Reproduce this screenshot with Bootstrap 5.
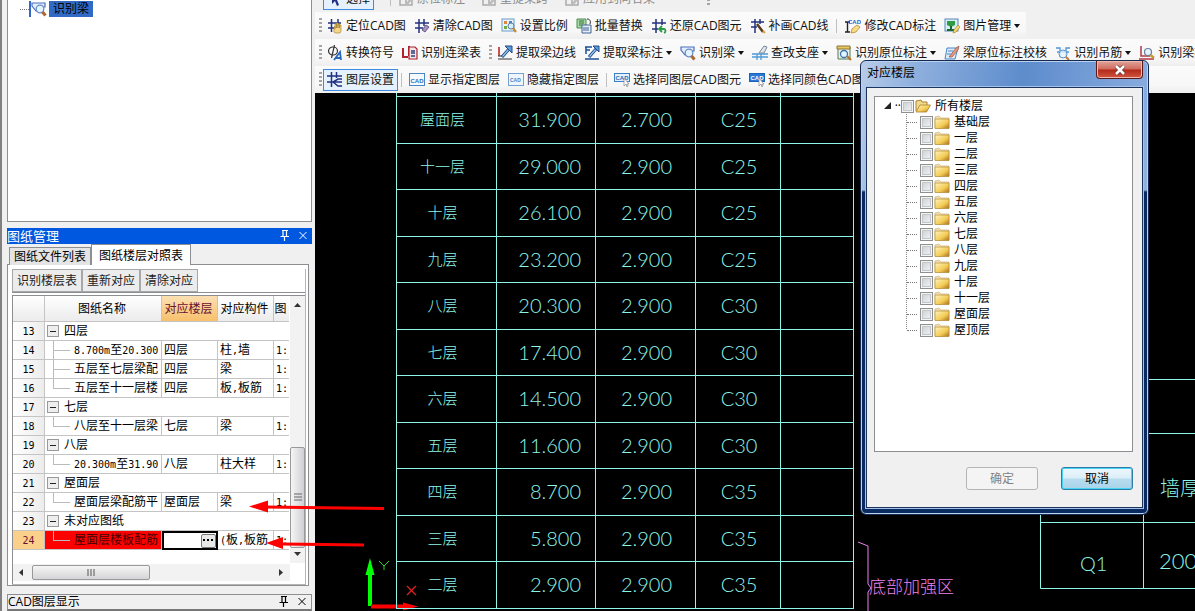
<!DOCTYPE html>
<html lang="zh-CN">
<head>
<meta charset="utf-8">
<meta name="viewport" content="width=device-width, initial-scale=1">
<title>图纸管理</title>
<link rel="stylesheet" href="https://cdn.jsdelivr.net/npm/bootstrap@5.3.0/dist/css/bootstrap.min.css">
<script src="https://cdn.jsdelivr.net/npm/bootstrap@5.3.0/dist/js/bootstrap.bundle.min.js"></script>
<style>
  :root { --face: #f0f0f0; --edge: #8c8e92; --cad: #8ff5e8; }
  body { font: 12px/16px "Open Sans", "Noto Sans CJK SC", sans-serif; color: #000; background: var(--face); }
  button { font: inherit; color: inherit; white-space: nowrap; }
  .hw { font-family: "DejaVu Sans Mono", monospace; font-size: 10px; line-height: 10px; }

  /* left dock */
  .dock { width: 315px; padding: 0 3px 0 5px; border-left: 2px solid #808080; }
  .tool-tree { height: 222px; border: 1px solid var(--edge); border-top: 0; background: #fff; padding: 1px 0 0 12px; }
  .tool-tree .dots { width: 9px; border-top: 1px dotted #777; }
  .tool-tree .pick { border-left: 2px solid #316ac5; padding-right: 2px; height: 16px; }
  .tool-tree a { background: #316ac5; color: #000; padding: 0 4px; height: 16px; line-height: 15px; text-decoration: none; }
  .cap { height: 16px; }
  .cap.on { background: #0058e0; color: #fff; margin-top: 6px; font-size: 13px; line-height: 15px; }
  .cap.off { border: 1px solid var(--edge); margin-top: 8px; border-bottom: 2px solid #777; height: 17px; line-height: 14px; }
  .cap button { border: 0; background: none; width: 18px; height: 14px; }
  .tabs { height: 21px; padding-left: 2px; margin-bottom: -1px; position: relative; z-index: 1; }
  .tabs button { border: 1px solid var(--edge); border-bottom: 0; background: #e4e4e4; padding: 0 4px; height: 18px; line-height: 17px; }
  .tabs button.on { background: #fff; height: 21px; line-height: 19px; padding: 0 7px; }
  .pane { border: 1px solid var(--edge); background: #fff; margin-right: 3px; height: 322px; padding: 4px 2px 2px 4px; }
  .pane-in { border: 1px solid #b5b5b5; border-width: 0 1px 1px 0; }
  .cmds button { border: 1px solid #a5a8ab; background: #ececec; height: 23px; padding: 0 4px; color: #222; }
  .cmds { border-bottom: 1px solid var(--edge); margin-bottom: 2px; }
  .grid-box { border: 1px solid var(--edge); border-right: 0; border-bottom: 0; height: 289px; overflow: hidden; }
  .sheet { table-layout: fixed; width: 276px; border-collapse: separate; border-spacing: 0; }
  .sheet th, .sheet td { height: 19px; padding: 0 0 0 2px; border: solid #c4c4c4; border-width: 0 1px 1px 0; white-space: nowrap; overflow: hidden; font-weight: 400; line-height: 16px; vertical-align: middle; }
  .sheet thead th { height: 26px; text-align: center; padding: 0 2px 0 0; background: linear-gradient(#fff, #f3f3f3 60%, #ececec); }
  .sheet thead th.hot { background: linear-gradient(#fbe0b4, #f7c06c); color: #6b1030; }
  .sheet tbody th { text-align: center; padding: 0; background: linear-gradient(90deg, #fff, #ececec); }
  .sheet td:last-child, .sheet th.last { border-right: 0; }
  .sheet tbody th.hot { background: #fbd08a; color: #6b1030; }
  .sheet .leaf { padding-left: 29px; background: linear-gradient(#bbb, #bbb) 8px 0/1px 100% no-repeat, linear-gradient(#bbb, #bbb) 9px 9px/16px 1px no-repeat; }
  .sheet .leaf.end { background-size: 1px 10px, 16px 1px; }
  .sheet .bad { background-color: #f00; color: #400; }
  .sheet .edit { padding: 0; border: 2px solid #000; background: #fff; }
  .fold { width: 12px; height: 12px; border: 1px solid #999; background: #eee; padding: 0; margin-right: 5px; display: flex; align-items: center; justify-content: center; }
  .fold::before { content: ""; width: 6px; height: 1px; background: #222; }
  .more { border: 1px solid #777; border-radius: 2px; background: #e8e8e8; height: 14px; width: 15px; padding: 0; display: flex; align-items: center; justify-content: center; margin-left: auto; }
  .vbar { width: 15px; margin-left: 1px; background: #f2f2f2; padding: 7px 0 6px; height: 267px; }
  .hbar { height: 17px; background: #f2f2f2; padding: 0 6px; margin: 1px 15px 0 0; }
  .thumb { border: 1px solid #999; border-radius: 2px; background: linear-gradient(#f5f5f5, #d5d5d8); display: flex; align-items: center; justify-content: center; }
  .vbar .thumb { height: 101px; width: 15px; background: linear-gradient(90deg, #f5f5f5, #d0d0d4); }
  .hbar .thumb { width: 118px; height: 15px; }

  /* toolbars */
  .strip { height: 27px; padding-left: 4px; background: linear-gradient(#fbfbfb, #f7f7f7 70%, #eee); overflow: hidden; }
  .strip.fit { align-self: flex-start; padding-right: 2px; }
  .cut { height: 12px; overflow: hidden; display: flex; align-items: flex-end; }
  .cut .strip { background: var(--face); width: 100%; }
  .grip { width: 3px; height: 15px; flex: none; background: repeating-linear-gradient(#a5a5a5 0 2px, transparent 2px 4px); margin-right: 1px; }
  .rule { width: 1px; height: 14px; flex: none; background: #c0c0c0; margin: 0 3px; }
  .tb { border: 1px solid transparent; background: none; height: 22px; padding: 0 3px; display: flex; align-items: center; gap: 3px; flex: none; color: #111; }
  .tb.on { border-color: #3c8be0; background: #e5f1fc; }
  .tb:disabled { color: #8b8b8b; }
  .tb svg, .ico { width: 16px; height: 16px; flex: none; }
  .tb.dropdown-toggle::after { margin-left: 0; border-width: 4px 3px 0; border-top-color: #111; vertical-align: middle; }

  /* drawing canvas */
  .canvas { background: #000; color: var(--cad); overflow: hidden; }
  .levels { position: relative; table-layout: fixed; width: 458px; margin: 3px 0 0 81px; border-collapse: separate; border-spacing: 0; font: 300 20px/24px Lato, "Noto Sans CJK SC", sans-serif; border: solid var(--cad); border-width: 1px 0 0 1px; }
  .levels th, .levels td { border: solid var(--cad); border-width: 0 1px 1px 0; height: 47px; padding: 0 0 2px; text-align: center; vertical-align: middle; font-weight: 300; }
  .levels tr:nth-child(even) > * { height: 46px; }
  .levels th { font-size: 15px; padding-right: 8px; }
  .levels td { padding-left: 2px; }
  .levels td.num { text-align: right; padding-right: 14px; }
  .drawing { position: absolute; inset: 0; width: 100%; height: 100%; font-family: Lato, "Noto Sans CJK SC", sans-serif; font-weight: 300; }
  .marks { position: absolute; left: 0; top: 0; width: 420px; height: 611px; pointer-events: none; z-index: 3; }

  /* dialog */
  .dlg { position: absolute; top: 60px; right: 46px; width: 289px; z-index: 5; border: 1px solid #14294d; border-radius: 6px; padding: 0 5px 6px; box-shadow: inset 0 0 0 1px #b9d2f2;
    background: linear-gradient(transparent, transparent 129px, #0a2a62 131px), linear-gradient(100deg, #b8cce8, #8fb0de 15%, #5d8ccc 45%, #82a7dc 75%, #a9c4e8); }
  .dlg-head { height: 26px; padding-left: 1px; }
  .dlg-head button { width: 47px; height: 18px; border: 1px solid #5b1a1a; border-top: 0; border-radius: 0 0 4px 4px; padding: 0; background: linear-gradient(#e0a59a, #cf6a5c 48%, #b3291a 52%, #d2573f); box-shadow: inset 0 0 0 1px #efb9ae; line-height: 14px; }
  .dlg-body { background: var(--face); border: 1px solid #1c355e; box-shadow: 0 0 0 1px #a7c2e8; padding: 8px 9px 17px 7px; }
  .floors { background: #fff; border: 1px solid var(--edge); height: 356px; padding: 1px 0 0 9px; list-style: none; margin: 0 0 15px; }
  .floors ul { list-style: none; margin: 0 0 0 22px; padding: 0; background: repeating-linear-gradient(#888 0 1px, transparent 1px 2px) 0 0/1px 216px no-repeat; }
  .floors label { display: flex; align-items: center; height: 16px; line-height: 16px; }
  .floors li li label::before { content: ""; width: 10px; border-top: 1px dotted #777; margin: 0 3px 0 1px; }
  .floors input { appearance: none; width: 13px; height: 13px; margin: 0 1px 0 0; border: 1px solid #8e8f8f; background: linear-gradient(135deg, #c9ccd0, #f6f6f6); box-shadow: inset 0 0 0 1px #f4f4f4, inset 0 0 0 2px #c3c6ca; }
  .floors svg { width: 16px; height: 14px; margin-right: 4px; }
  .twist { width: 17px; height: 8px; flex: none; display: flex; align-items: center; }
  .twist svg { margin: 0; width: 8px; height: 8px; }
  .dlg-btn { width: 72px; height: 23px; border: 1px solid #b5b5b5; border-radius: 3px; background: #f4f4f4; line-height: 18px; padding: 0; }
  .dlg-btn:disabled { color: #838383; }
  .dlg-btn.main { border-color: #2c7ea8; box-shadow: inset 0 0 0 1px #46d3f5; background: linear-gradient(#edf7fc, #dceef8 48%, #b8dcee 52%, #a8d4ea); margin-left: 23px; }
</style>
</head>
<body class="vh-100 overflow-hidden d-flex position-relative">

<svg class="position-absolute" width="0" height="0" aria-hidden="true">
  <defs>
    <linearGradient id="gold" x1="0" y1="0" x2="1" y2="1"><stop offset="0" stop-color="#fff3bd"/><stop offset=".6" stop-color="#f3cb55"/><stop offset="1" stop-color="#a8701a"/></linearGradient>
  </defs>
</svg>
<svg class="d-none" aria-hidden="true">
  <symbol id="i-locate" viewBox="0 0 16 16"><path d="M1 5h13M1 10h7M4.500 1v13M11 1v6" stroke="#23307f" stroke-width="1.500" fill="none"/><path d="M7 14V9l1-1v3-5h1.500v4-5H11v5-4h1.500v4-3H14v6l-1 2H8z" fill="#f6d68a" stroke="#a8842c" stroke-width=".7"/></symbol>
  <symbol id="i-wipe" viewBox="0 0 16 16"><path d="M1 5h14M1 10h8M5 1v14M10 1v7" stroke="#23307f" stroke-width="1.500" fill="none"/><path d="M8 12l4-5 3 2-4 5z" fill="#a894c4" stroke="#4d4170" stroke-width=".8"/></symbol>
  <symbol id="i-scale" viewBox="0 0 16 16"><rect x="1" y="1" width="12" height="12" fill="#e9f3fc" stroke="#6a9bc8"/><path d="M3 3h3v3H3z" fill="#e0853a"/><path d="M3 8h3v3H3z" fill="#6fae3c"/><path d="M8 3h3v2H8z" fill="#4a86c6"/><circle cx="10" cy="8" r="3" fill="#d5ecfa" stroke="#5a7fa8"/><path d="M12 10l3 4" stroke="#c58a35" stroke-width="2.200"/></symbol>
  <symbol id="i-swap" viewBox="0 0 16 16"><path d="M1 1h9v9H1z" fill="#a9d8a0" stroke="#4c8d54"/><path d="M3 3h5M3 5h5M3 7h3" stroke="#36714a"/><path d="M6 7h9v8H6z" fill="#e4eefa" stroke="#43628f"/><path d="M8 9v4M10 9v4M12 9v4" stroke="#43628f"/><path d="M11 1c3 0 4 2 3 5" stroke="#333" fill="none"/></symbol>
  <symbol id="i-restore" viewBox="0 0 16 16"><path d="M1 5h14M1 11h6M5 1v14M11 1v6" stroke="#23307f" stroke-width="1.500" fill="none"/><path d="M8 11h5c2 0 2 3 0 4M11 8l-3 3 3 3" stroke="#2e9a48" stroke-width="1.800" fill="none"/></symbol>
  <symbol id="i-pen" viewBox="0 0 16 16"><path d="M1 4h13M1 9h6M5 1v14M10 1v5" stroke="#23307f" stroke-width="1.500" fill="none"/><path d="M7 6l6 8" stroke="#5b3b1c" stroke-width="2.500"/><path d="M13 13l2 2" stroke="#e0a03a" stroke-width="2"/></symbol>
  <symbol id="i-edit" viewBox="0 0 16 16"><path d="M0 4h5M2.500 4v10M0 14h5" stroke="#222" stroke-width="1.400" fill="none"/><text x="3" y="6" font-size="6" font-weight="700" fill="#1f63c8" font-family="Liberation Sans">CAD</text><path d="M6 15l1-4 5-4 3 2-4 5z" fill="#f7dd8c" stroke="#b88428" stroke-width=".8"/></symbol>
  <symbol id="i-image" viewBox="0 0 16 16"><rect x="1" y="1" width="13" height="12" fill="#d9ecfa" stroke="#5d87b4"/><path d="M3 3h8v4L7 9 3 7z" fill="#2f9c43"/><path d="M7 8v4M3 12h7" stroke="#1c6a2c" stroke-width="2"/><path d="M9 15l1-3 4-5 2 2-4 5z" fill="#f8dc72" stroke="#b0812a" stroke-width=".7"/></symbol>
  <symbol id="i-phi" viewBox="0 0 16 16"><ellipse cx="6" cy="6" rx="4.500" ry="4" fill="none" stroke="#333" stroke-width="1.200"/><path d="M7.500 0l-3 13" stroke="#333" stroke-width="1.200"/><path d="M7 15l6-8 1 8M9 13h5" stroke="#2868b8" stroke-width="1.800" fill="none"/></symbol>
  <symbol id="i-link" viewBox="0 0 16 16"><path d="M1 3v9h5M7 1v10" stroke="#b0232d" stroke-width="2" fill="none"/><path d="M7 2h6l2 2v10H7z" fill="#f6e3e5" stroke="#a82430" stroke-width="1.200"/><path d="M9 6h4M9 8h4M9 11h4" stroke="#29417c" stroke-width="1.300"/></symbol>
  <symbol id="i-edge" viewBox="0 0 16 16"><path d="M2 2v9" stroke="#c02828" stroke-width="1.600"/><path d="M1 11h5M1 14h14" stroke="#333" stroke-width="1.200"/><path d="M5 12l7-8" stroke="#1d4c8c" stroke-width="3.200"/><path d="M5.500 11.500l6-7" stroke="#9cc8ee" stroke-width="1.200"/><path d="M8 1h7v7z" fill="#5f9bd6" stroke="#1d4c8c"/></symbol>
  <symbol id="i-note" viewBox="0 0 16 16"><path d="M1 2h7M2 2v7M2 5h4M1 14h14" stroke="#1e4f98" stroke-width="1.500"/><path d="M5 12l7-8" stroke="#1d4c8c" stroke-width="3.200"/><path d="M5.500 11.500l6-7" stroke="#9cc8ee" stroke-width="1.200"/><path d="M9 1h6v6z" fill="#5f9bd6" stroke="#1d4c8c"/></symbol>
  <symbol id="i-find" viewBox="0 0 16 16"><path d="M1 2h13v4h-2v4H5L1 5z" fill="#e3eefb" stroke="#4b6fb8" stroke-width="1.200"/><circle cx="9" cy="8" r="3.800" fill="#e2f4fd" stroke="#6b8fc4" stroke-width="1.300"/><path d="M11.500 11l3 3.500" stroke="#b0652a" stroke-width="3"/></symbol>
  <symbol id="i-support" viewBox="0 0 16 16"><path d="M0 9h16M0 12h16M5 9v6M9 9v6" stroke="#4d9bd6" stroke-width="1.300"/><path d="M7 8l5-7 3 1-3 6z" fill="#dfe6ee" stroke="#7a8797"/></symbol>
  <symbol id="i-origin" viewBox="0 0 16 16"><path d="M2 2h12v12H2z" fill="#eaf2e4" stroke="#55785c"/><path d="M1 1h13v3H1z" fill="#e8c861" stroke="#8d7534"/><circle cx="8" cy="9" r="3.500" fill="#e2f4fd" stroke="#3e74a8" stroke-width="1.300"/><path d="M11 11l4 4" stroke="#b9772d" stroke-width="2.200"/></symbol>
  <symbol id="i-check" viewBox="0 0 16 16"><path d="M3 3h11l-3 11H1z" fill="#dcebfa" stroke="#4a86c6"/><path d="M4 6h5M3 9h4" stroke="#4a86c6"/><path d="M5 12l7-9 3-2-1 4-6 7z" fill="#e49a80" stroke="#94503d" stroke-width=".7"/></symbol>
  <symbol id="i-hang" viewBox="0 0 16 16"><path d="M1 3h4v3M15 3h-4v3M2 7h12M5 7v5M11 7v5" stroke="#4d94d8" stroke-width="1.300" fill="none"/><circle cx="8" cy="9" r="4" fill="#e5f4fd" fill-opacity=".8" stroke="#5b94cc"/><path d="M11 12l3 3" stroke="#c27a2c" stroke-width="2"/></symbol>
  <symbol id="i-beam" viewBox="0 0 16 16"><path d="M2 1v10h9M0 14h15" stroke="#b0384a" stroke-width="1.500" fill="none"/><circle cx="9" cy="7" r="3.500" fill="#e2f4fd" stroke="#6b7f9c" stroke-width="1.200"/><path d="M11.500 10l3.500 3" stroke="#c29a2c" stroke-width="2.400"/></symbol>
  <symbol id="i-layers" viewBox="0 0 16 16"><path d="M0 4h15M0 10h6M4.500 0v15M9.500 0v6M15 7h-4l-5 3h9M6 10l5 4h4" stroke="#23307f" stroke-width="1.500" fill="none"/></symbol>
  <symbol id="i-cad" viewBox="0 0 16 16"><rect x=".5" y="1.500" width="15" height="12" fill="#f4faff" stroke="#4b87c4"/><text x="1.500" y="10.500" font-size="6" font-weight="700" fill="#2a6cb8" font-family="Liberation Sans">CAD</text></symbol>
  <symbol id="i-cadhide" viewBox="0 0 16 16"><rect x=".5" y="1.500" width="15" height="12" fill="#eef5fc" stroke="#74a2d2"/><text x="2" y="9.500" font-size="5" font-weight="700" fill="#4d83bd" font-family="Liberation Sans">CAD</text></symbol>
  <symbol id="i-cadpick" viewBox="0 0 16 16"><rect x=".5" y="1.500" width="15" height="8" fill="#e3f1fd" stroke="#3c7fc6"/><text x="1.500" y="8" font-size="6" font-weight="700" fill="#2a6cb8" font-family="Liberation Sans">CAD</text><path d="M10 6v8l2-2 1 3 1-1-1-2h2z" fill="#fff" stroke="#888" stroke-width=".7"/></symbol>
  <symbol id="i-cadcolor" viewBox="0 0 16 16"><rect x=".5" y="1.500" width="15" height="8" fill="#2a78d6" stroke="#1c62b8"/><text x="1.500" y="8" font-size="6" font-weight="700" fill="#fff" font-family="Liberation Sans">CAD</text><path d="M10 6v8l2-2 1 3 1-1-1-2h2z" fill="#fff" stroke="#888" stroke-width=".7"/></symbol>
  <symbol id="i-arrow" viewBox="0 0 16 16"><path d="M5 1v12l3-3 2 5 2-1-2-5h4z" fill="#23307f"/></symbol>
  <symbol id="i-grey" viewBox="0 0 16 16"><path d="M2 2h12v12H2zM5 5h6M5 8h3v5" fill="none" stroke="#aaa" stroke-width="1.500"/><path d="M8 14l6-7" stroke="#bbb" stroke-width="2.500"/></symbol>
  <symbol id="i-folder" viewBox="0 0 16 14"><path d="M1 2l4-1 2 2h8v10H1z" fill="#f0e2b8" stroke="#c9a860" stroke-width=".6"/><path d="M1 4h14v9.500H1z" fill="url(#gold)" stroke="#b58a35" stroke-width=".7"/></symbol>
  <symbol id="i-open" viewBox="0 0 16 14"><path d="M1 12V2l5-1 1 2h5v3" fill="#f3d98e" stroke="#a8822f"/><path d="M1 13l4-7h10.500l-4 7z" fill="url(#gold)" stroke="#a8822f" stroke-width=".8"/></symbol>
  <symbol id="i-pin" viewBox="0 0 12 12"><path d="M3 1.500h6M4 1.500v6M7.500 1v6.500M1.500 7.500h8.500M5.500 8v4" stroke="currentColor" stroke-width="1.200" fill="none"/></symbol>
  <symbol id="i-x" viewBox="0 0 12 12"><path d="M2.500 3l7 7M9.500 3l-7 7" stroke="currentColor" stroke-width="1" fill="none"/></symbol>
</svg>

<aside class="dock d-flex flex-column flex-shrink-0">
  <div class="tool-tree flex-shrink-0">
    <div class="d-flex align-items-center">
      <span class="dots"></span>
      <span class="pick d-flex"><svg class="ico"><use href="#i-find"/></svg></span>
      <a href="#">识别梁</a>
    </div>
  </div>

  <div class="cap on d-flex align-items-center flex-shrink-0"><span class="flex-grow-1">图纸管理</span>
    <button aria-label="固定" class="d-flex justify-content-center p-0"><svg width="12" height="12"><use href="#i-pin"/></svg></button>
    <button aria-label="关闭" class="d-flex justify-content-center p-0"><svg width="12" height="12"><use href="#i-x"/></svg></button>
  </div>
  <div class="tabs d-flex align-items-end flex-shrink-0"><button>图纸文件列表</button><button class="on">图纸楼层对照表</button></div>
  <div class="pane flex-shrink-0">
    <div class="pane-in">
      <div class="cmds d-flex"><button>识别楼层表</button><button>重新对应</button><button>清除对应</button></div>
      <div class="grid-box">
        <div class="d-flex align-items-start">
          <table class="sheet flex-shrink-0">
            <colgroup><col style="width:32px"><col style="width:117px"><col style="width:56px"><col style="width:56px"><col></colgroup>
            <thead><tr><th></th><th>图纸名称</th><th class="hot">对应楼层</th><th>对应构件</th><th class="last">图</th></tr></thead>
            <tbody>
              <tr><th><span class="hw">13</span></th><td colspan="4"><div class="d-flex align-items-center"><button class="fold" aria-label="收起"></button>四层</div></td></tr>
              <tr><th><span class="hw">14</span></th><td class="leaf"><span class="hw">8.700m</span>至<span class="hw">20.300</span></td><td>四层</td><td>柱<span class="hw">,</span>墙</td><td><span class="hw">1:</span></td></tr>
              <tr><th><span class="hw">15</span></th><td class="leaf">五层至七层梁配</td><td>四层</td><td>梁</td><td><span class="hw">1:</span></td></tr>
              <tr><th><span class="hw">16</span></th><td class="leaf end">五层至十一层楼</td><td>四层</td><td>板<span class="hw">,</span>板筋</td><td><span class="hw">1:</span></td></tr>
              <tr><th><span class="hw">17</span></th><td colspan="4"><div class="d-flex align-items-center"><button class="fold" aria-label="收起"></button>七层</div></td></tr>
              <tr><th><span class="hw">18</span></th><td class="leaf end">八层至十一层梁</td><td>七层</td><td>梁</td><td><span class="hw">1:</span></td></tr>
              <tr><th><span class="hw">19</span></th><td colspan="4"><div class="d-flex align-items-center"><button class="fold" aria-label="收起"></button>八层</div></td></tr>
              <tr><th><span class="hw">20</span></th><td class="leaf end"><span class="hw">20.300m</span>至<span class="hw">31.90</span></td><td>八层</td><td>柱大样</td><td><span class="hw">1:</span></td></tr>
              <tr><th><span class="hw">21</span></th><td colspan="4"><div class="d-flex align-items-center"><button class="fold" aria-label="收起"></button>屋面层</div></td></tr>
              <tr><th><span class="hw">22</span></th><td class="leaf end">屋面层梁配筋平</td><td>屋面层</td><td>梁</td><td><span class="hw">1:</span></td></tr>
              <tr><th><span class="hw">23</span></th><td colspan="4"><div class="d-flex align-items-center"><button class="fold" aria-label="收起"></button>未对应图纸</div></td></tr>
              <tr><th class="hot"><span class="hw">24</span></th><td class="leaf end bad">屋面层楼板配筋</td><td class="edit"><button class="more" aria-label="选择楼层"><svg width="11" height="3"><path d="M0 0h2v2H0zM4 0h2v2H4zM8 0h2v2H8z"/></svg></button></td><td><span class="hw">(</span>板<span class="hw">,</span>板筋</td><td><span class="hw">1:</span></td></tr>
            </tbody>
          </table>
          <div class="vbar d-flex flex-column align-items-center">
            <svg width="8" height="5"><path d="M0 4l3.500-4L7 4z" fill="#333"/></svg>
            <div class="thumb mt-auto mb-1"><svg width="8" height="9"><path d="M0 1h8M0 4h8M0 7h8" stroke="#666"/></svg></div>
            <svg width="8" height="5"><path d="M0 0l3.500 4L7 0z" fill="#333"/></svg>
          </div>
        </div>
        <div class="hbar d-flex align-items-center">
          <svg width="5" height="8"><path d="M4 0L0 3.500 4 7z" fill="#333"/></svg>
          <div class="thumb ms-2"><svg width="9" height="7"><path d="M1 0v7M4 0v7M7 0v7" stroke="#555"/></svg></div>
          <svg class="ms-auto" width="5" height="8"><path d="M0 0l4 3.500L0 7z" fill="#333"/></svg>
        </div>
      </div>
    </div>
  </div>
  <div class="cap off d-flex align-items-center flex-shrink-0"><span class="flex-grow-1">CAD图层显示</span>
    <button aria-label="固定" class="d-flex justify-content-center p-0"><svg width="12" height="12"><use href="#i-pin"/></svg></button>
    <button aria-label="关闭" class="d-flex justify-content-center p-0"><svg width="12" height="12"><use href="#i-x"/></svg></button>
  </div>
</aside>

<main class="flex-grow-1 d-flex flex-column overflow-hidden">
  <div class="cut flex-shrink-0"><div class="strip d-flex align-items-center">
    <span class="grip invisible"></span>
    <button class="tb on"><svg><use href="#i-arrow"/></svg>选择</button>
    <span class="rule ms-3"></span>
    <button class="tb" disabled><svg><use href="#i-grey"/></svg>原位标注</button>
    <button class="tb ms-2" disabled><svg><use href="#i-grey"/></svg>重提梁跨</button>
    <button class="tb ms-2" disabled><svg><use href="#i-grey"/></svg>应用到同名梁</button>
    <span class="grip ms-5"></span>
  </div></div>
  <div class="strip fit d-flex align-items-center flex-shrink-0">
    <span class="grip"></span>
    <button class="tb"><svg><use href="#i-locate"/></svg>定位CAD图</button>
    <button class="tb"><svg><use href="#i-wipe"/></svg>清除CAD图</button>
    <button class="tb"><svg><use href="#i-scale"/></svg>设置比例</button>
    <button class="tb"><svg><use href="#i-swap"/></svg>批量替换</button>
    <button class="tb"><svg><use href="#i-restore"/></svg>还原CAD图元</button>
    <button class="tb"><svg><use href="#i-pen"/></svg>补画CAD线</button>
    <span class="rule mx-1"></span>
    <button class="tb"><svg><use href="#i-edit"/></svg>修改CAD标注</button>
    <button class="tb dropdown-toggle"><svg><use href="#i-image"/></svg>图片管理</button>
  </div>
  <div class="strip d-flex align-items-center flex-shrink-0">
    <span class="grip"></span>
    <button class="tb"><svg><use href="#i-phi"/></svg>转换符号</button>
    <button class="tb"><svg><use href="#i-link"/></svg>识别连梁表</button>
    <span class="grip ms-1"></span>
    <button class="tb"><svg><use href="#i-edge"/></svg>提取梁边线</button>
    <button class="tb dropdown-toggle"><svg><use href="#i-note"/></svg>提取梁标注</button>
    <button class="tb dropdown-toggle"><svg><use href="#i-find"/></svg>识别梁</button>
    <button class="tb dropdown-toggle"><svg><use href="#i-support"/></svg>查改支座</button>
    <button class="tb dropdown-toggle"><svg><use href="#i-origin"/></svg>识别原位标注</button>
    <button class="tb"><svg><use href="#i-check"/></svg>梁原位标注校核</button>
    <button class="tb dropdown-toggle"><svg><use href="#i-hang"/></svg>识别吊筋</button>
    <button class="tb"><svg><use href="#i-beam"/></svg>识别梁构件</button>
  </div>
  <div class="strip d-flex align-items-center flex-shrink-0">
    <span class="grip"></span>
    <button class="tb on"><svg><use href="#i-layers"/></svg>图层设置</button>
    <span class="rule"></span>
    <button class="tb"><svg><use href="#i-cad"/></svg>显示指定图层</button>
    <button class="tb"><svg><use href="#i-cadhide"/></svg>隐藏指定图层</button>
    <span class="rule"></span>
    <button class="tb"><svg><use href="#i-cadpick"/></svg>选择同图层CAD图元</button>
    <button class="tb"><svg><use href="#i-cadcolor"/></svg>选择同颜色CAD图元</button>
  </div>

  <div class="canvas flex-grow-1 position-relative">
    <svg class="drawing">
      <g transform="translate(-315 -93)">
        <path d="M396.500 93V97M496.500 93V97M595.500 93V97M695.500 93V97M780.500 93V97M853.500 93V97M1149 379.500H1195M1149 433.500H1195M1040.500 515V588.500H1195M1143.500 515V588M1040 522.500H1195" stroke="#8ff5e8" fill="none"/>
        <text x="1080" y="571" font-size="20" fill="#8ff5e8">Q1</text>
        <text x="1159" y="569" font-size="22" fill="#8ff5e8">200</text>
        <text x="1160" y="496" font-size="20" fill="#8ff5e8">墙厚</text>
        <path d="M858 542l10 4v38l3 4-3 4v20" stroke="#ee82ee" fill="none"/>
        <text x="869" y="593" font-size="17" fill="#ee82ee">底部加强区</text>
        <path d="M370 606V575" stroke="#0f0" stroke-width="4"/><path d="M370 558l4.500 17h-9z" fill="#0f0"/>
        <path d="M371 606.500H405" stroke="#f00" stroke-width="4"/><path d="M418 606.500l-15 4v-8z" fill="#f00"/>
        <path d="M379 561l5 5 5-5M384 566v4" stroke="#2fd62f" fill="none"/>
        <path d="M407 586l9 9M416 586l-9 9" stroke="#e02020" stroke-width="1.300" fill="none"/>
      </g>
    </svg>
    <table class="levels">
      <colgroup><col style="width:100px"><col style="width:99px"><col style="width:100px"><col style="width:85px"><col></colgroup>
      <tbody>
        <tr><th>屋面层</th><td class="num">31.900</td><td>2.700</td><td>C25</td><td></td></tr>
        <tr><th>十一层</th><td class="num">29.000</td><td>2.900</td><td>C25</td><td></td></tr>
        <tr><th>十层</th><td class="num">26.100</td><td>2.900</td><td>C25</td><td></td></tr>
        <tr><th>九层</th><td class="num">23.200</td><td>2.900</td><td>C25</td><td></td></tr>
        <tr><th>八层</th><td class="num">20.300</td><td>2.900</td><td>C30</td><td></td></tr>
        <tr><th>七层</th><td class="num">17.400</td><td>2.900</td><td>C30</td><td></td></tr>
        <tr><th>六层</th><td class="num">14.500</td><td>2.900</td><td>C30</td><td></td></tr>
        <tr><th>五层</th><td class="num">11.600</td><td>2.900</td><td>C30</td><td></td></tr>
        <tr><th>四层</th><td class="num">8.700</td><td>2.900</td><td>C35</td><td></td></tr>
        <tr><th>三层</th><td class="num">5.800</td><td>2.900</td><td>C35</td><td></td></tr>
        <tr><th>二层</th><td class="num">2.900</td><td>2.900</td><td>C35</td><td></td></tr>
      </tbody>
    </table>
  </div>
</main>

<svg class="marks" aria-hidden="true">
  <path d="M384 508.500L265 507M364 545L282 544" stroke="#f00" stroke-width="3"/>
  <path d="M249 506.500l19-6v12zM266 543l17-6v12z" fill="#f00"/>
</svg>

<section class="dlg" role="dialog" aria-label="对应楼层">
  <div class="dlg-head d-flex justify-content-between align-items-start">
    <span class="pt-1">对应楼层</span>
    <button aria-label="关闭"><svg width="12" height="10"><path d="M2 1l8 8M10 1L2 9" stroke="#633" stroke-width="4"/><path d="M2 1l8 8M10 1L2 9" stroke="#fff" stroke-width="2.500"/></svg></button>
  </div>
  <div class="dlg-body">
    <ul class="floors">
      <li><label><span class="twist"><svg class="me-1"><path d="M7 0v7H0z" fill="#222"/></svg><span>··</span></span><input type="checkbox"><svg><use href="#i-open"/></svg>所有楼层</label>
        <ul>
          <li><label><input type="checkbox"><svg><use href="#i-folder"/></svg>基础层</label></li>
          <li><label><input type="checkbox"><svg><use href="#i-folder"/></svg>一层</label></li>
          <li><label><input type="checkbox"><svg><use href="#i-folder"/></svg>二层</label></li>
          <li><label><input type="checkbox"><svg><use href="#i-folder"/></svg>三层</label></li>
          <li><label><input type="checkbox"><svg><use href="#i-folder"/></svg>四层</label></li>
          <li><label><input type="checkbox"><svg><use href="#i-folder"/></svg>五层</label></li>
          <li><label><input type="checkbox"><svg><use href="#i-folder"/></svg>六层</label></li>
          <li><label><input type="checkbox"><svg><use href="#i-folder"/></svg>七层</label></li>
          <li><label><input type="checkbox"><svg><use href="#i-folder"/></svg>八层</label></li>
          <li><label><input type="checkbox"><svg><use href="#i-folder"/></svg>九层</label></li>
          <li><label><input type="checkbox"><svg><use href="#i-folder"/></svg>十层</label></li>
          <li><label><input type="checkbox"><svg><use href="#i-folder"/></svg>十一层</label></li>
          <li><label><input type="checkbox"><svg><use href="#i-folder"/></svg>屋面层</label></li>
          <li><label><input type="checkbox"><svg><use href="#i-folder"/></svg>屋顶层</label></li>
        </ul>
      </li>
    </ul>
    <div class="d-flex justify-content-end"><button class="dlg-btn" disabled>确定</button><button class="dlg-btn main">取消</button></div>
  </div>
</section>
</body>
</html>
